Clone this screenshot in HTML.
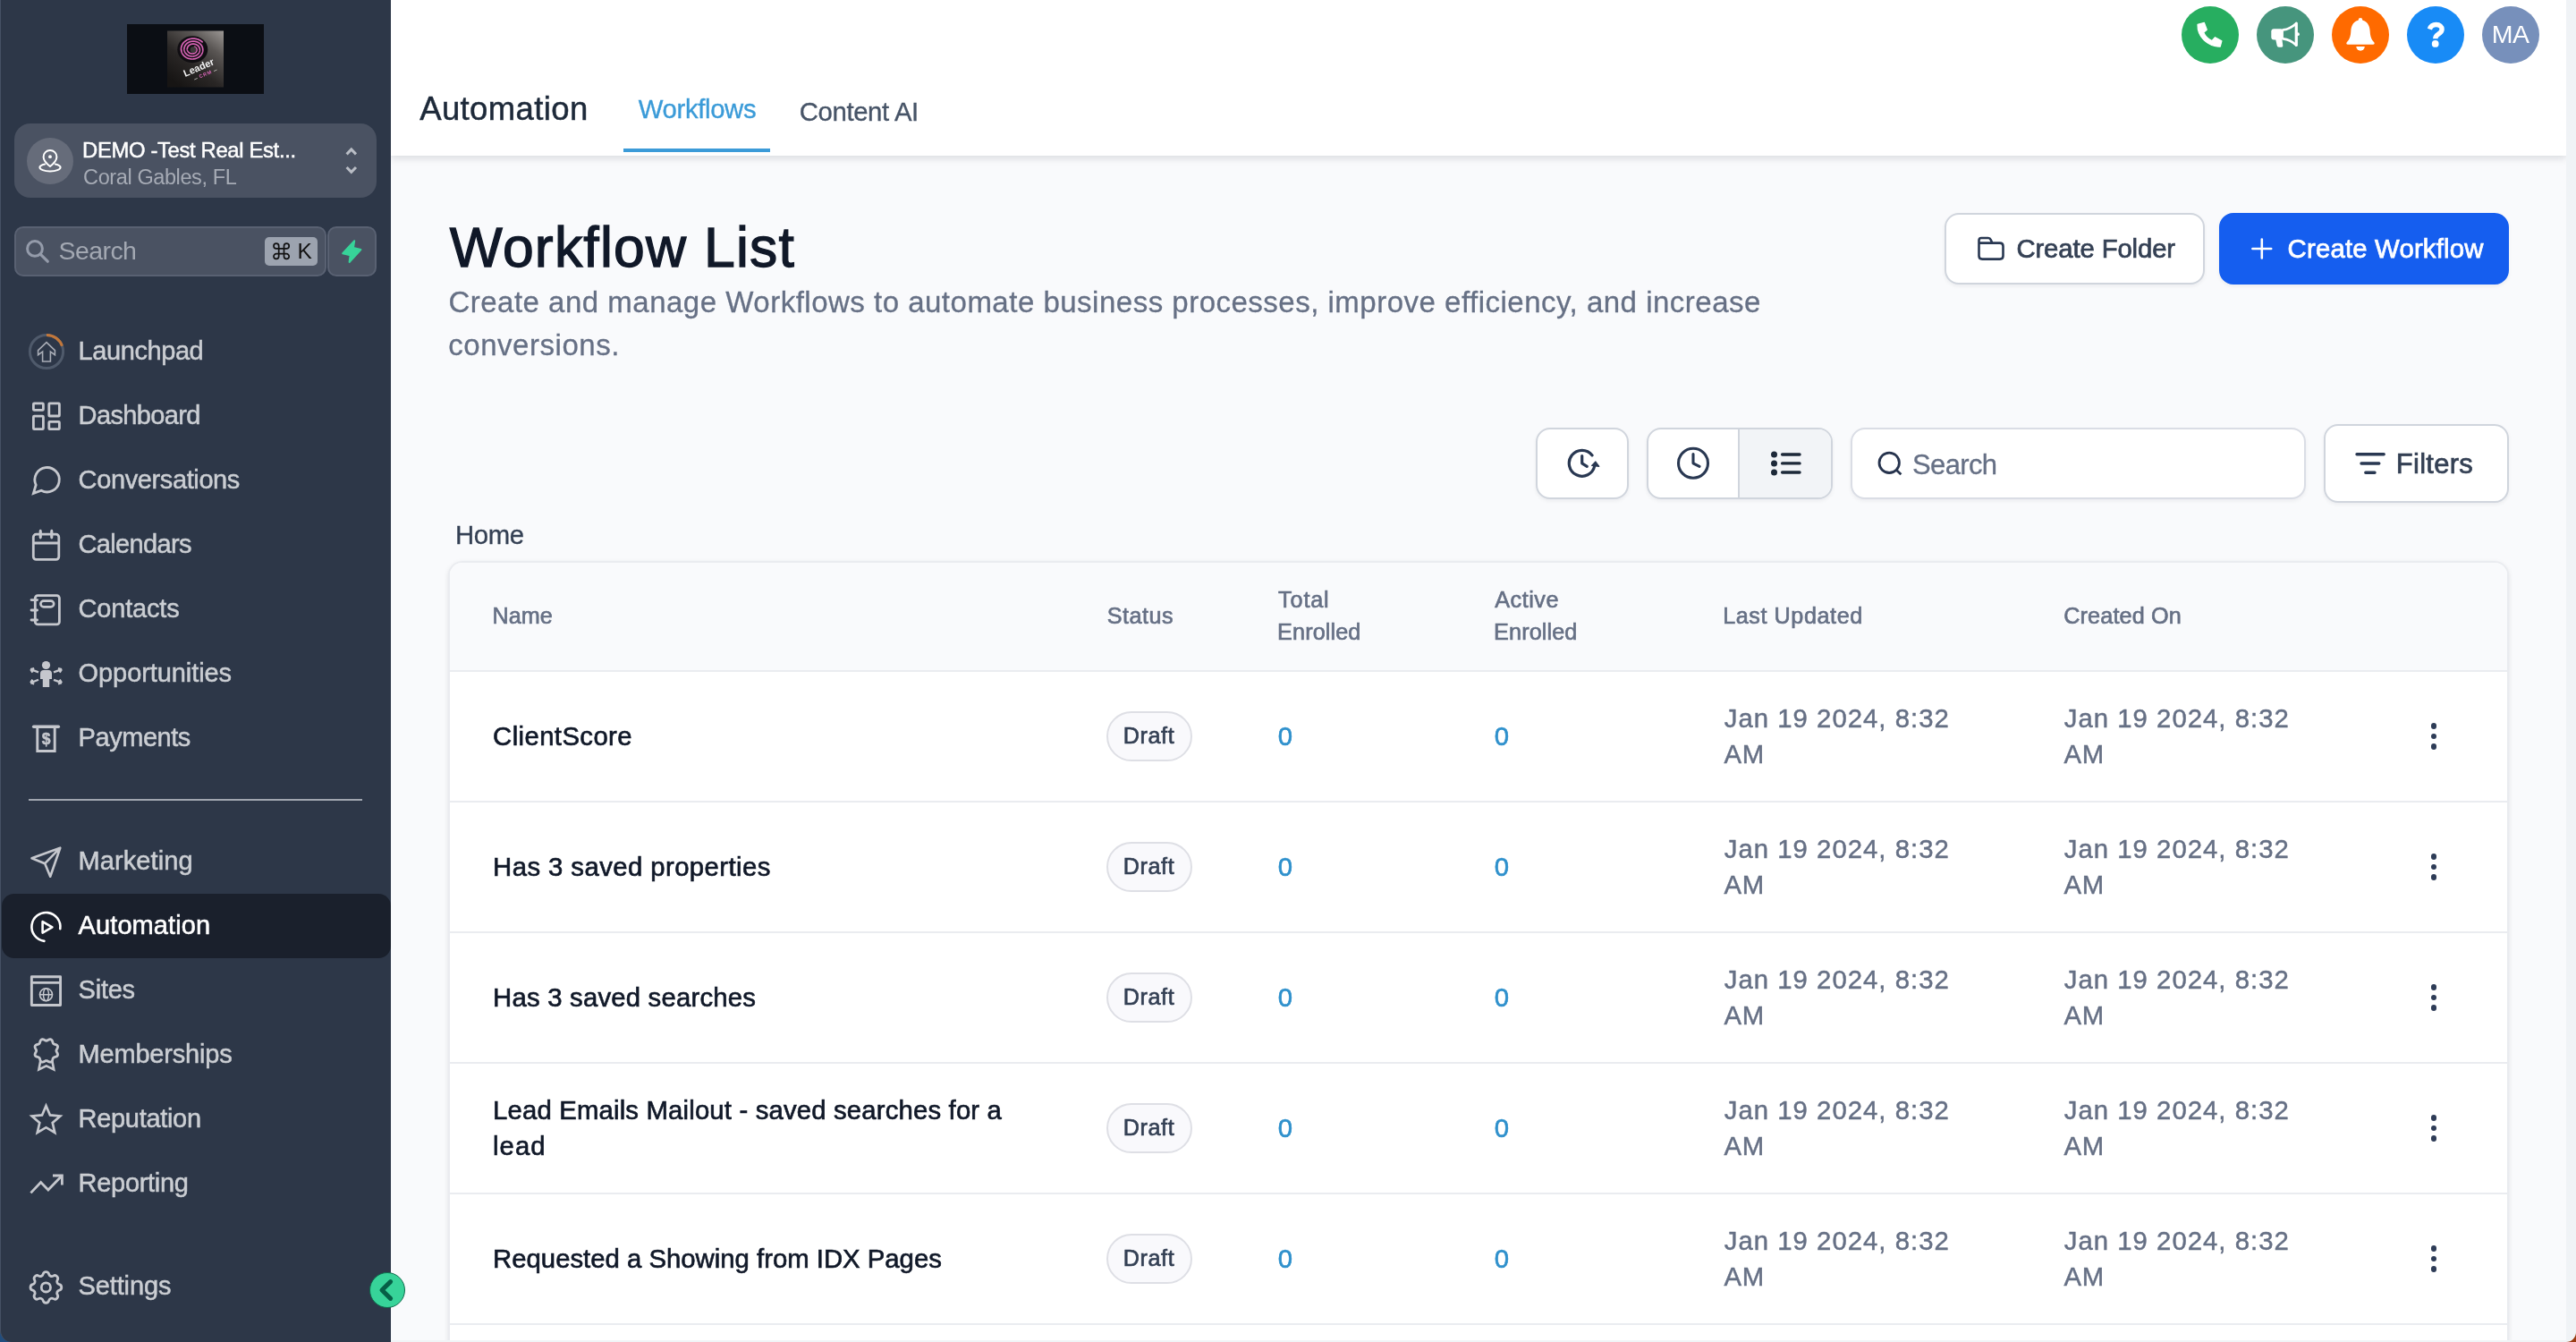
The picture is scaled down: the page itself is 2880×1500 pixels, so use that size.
<!DOCTYPE html>
<html lang="en">
<head>
<meta charset="utf-8">
<title>Workflow List</title>
<style>
*{box-sizing:border-box;margin:0;padding:0}
html,body{width:2880px;height:1500px;overflow:hidden;background:#F9FAFC;font-family:"Liberation Sans",sans-serif}
.abs{position:absolute}
.t{position:absolute;white-space:nowrap;line-height:1;font-family:"Liberation Sans",sans-serif;-webkit-font-smoothing:antialiased}
svg{position:absolute;overflow:visible;will-change:transform}
.tx{position:absolute;left:0;top:0;width:2880px;height:1500px;will-change:transform;pointer-events:none}
#sidebar{position:absolute;left:0;top:0;width:437px;height:1500px;background:#2D3748;border-left:1px solid #465164;border-bottom-left-radius:13px;overflow:visible}
#corner{position:absolute;left:0;top:1480px;width:20px;height:20px;background:#214D7E}
#corner2{position:absolute;left:2869px;top:1480px;width:11px;height:20px;background:#993A10}
#strip{position:absolute;left:437px;top:1498px;width:2432px;height:2px;background:#F0F4F6}
#header{position:absolute;left:437px;top:0;width:2432px;height:174px;background:#fff;box-shadow:0 3px 8px rgba(10,15,30,.13)}
#gutter{position:absolute;left:2869px;top:0;width:11px;height:1500px;background:#F0F3F6;border-bottom-right-radius:13px}
.btn{position:absolute;background:#fff;border:2px solid #D0D5DD;border-radius:16px;box-shadow:0 2px 4px rgba(16,24,40,.06)}
#table{position:absolute;left:501px;top:627px;width:2304px;height:900px;border:2px solid #EAECF0;border-radius:16px;background:#fff;box-shadow:0 2px 6px rgba(16,24,40,.07),0 2px 4px rgba(16,24,40,.04);overflow:hidden}
#thead{position:absolute;left:0;top:0;width:100%;height:122px;background:#F9FAFC;border-bottom:2px solid #EAECF0}
.row{position:absolute;left:0;width:100%;height:2px;background:#EAECF0}
.badge{position:absolute;width:96px;height:56px;border:2px solid #DEDFE5;border-radius:28px;background:#F9F9FC}
.circ{position:absolute;width:64px;height:64px;border-radius:50%;top:7px}
</style>
</head>
<body>
<div id="corner"></div>
<div id="corner2"></div>

<!-- MAIN -->
<div id="table">
  <div id="thead"></div>
  <div class="row" style="top:266px"></div>
  <div class="row" style="top:412px"></div>
  <div class="row" style="top:558px"></div>
  <div class="row" style="top:704px"></div>
  <div class="row" style="top:850px"></div>
</div>
<div id="header">
  <div class="abs" style="left:260px;top:166px;width:164px;height:4px;background:#3B9BD8"></div>
</div>
<div id="strip"></div>
<div id="gutter"></div>
<div class="circ" style="left:2439px;background:#27AE60"></div>
<div class="circ" style="left:2523px;background:#46957D"></div>
<div class="circ" style="left:2607px;background:#FF6A00"></div>
<div class="circ" style="left:2691px;background:#188BF6"></div>
<div class="circ" style="left:2775px;background:#7790BB"></div>

<div class="btn" style="left:2174px;top:238px;width:291px;height:80px"></div>
<div class="btn" style="left:2481px;top:238px;width:324px;height:80px;background:#155EEF;border-color:#155EEF"></div>
<div class="btn" style="left:1717px;top:478px;width:104px;height:80px"></div>
<div class="btn" style="left:1841px;top:478px;width:208px;height:80px;overflow:hidden"><div class="abs" style="left:100px;top:0;width:2px;height:76px;background:#D0D5DD"></div><div class="abs" style="left:102px;top:0;width:102px;height:76px;background:#F2F4F7"></div></div>
<div class="btn" style="left:2069px;top:478px;width:509px;height:80px;border-color:#DADDE5"></div>
<div class="btn" style="left:2598px;top:474px;width:207px;height:88px"></div>
<div class="badge" style="left:1237px;top:795px"></div>
<div class="abs" style="left:2717.8px;top:808.15px;width:6.4px;height:6.4px;border-radius:50%;background:#2E3C57"></div>
<div class="abs" style="left:2717.8px;top:819.80px;width:6.4px;height:6.4px;border-radius:50%;background:#2E3C57"></div>
<div class="abs" style="left:2717.8px;top:831.45px;width:6.4px;height:6.4px;border-radius:50%;background:#2E3C57"></div>
<div class="badge" style="left:1237px;top:941px"></div>
<div class="abs" style="left:2717.8px;top:954.15px;width:6.4px;height:6.4px;border-radius:50%;background:#2E3C57"></div>
<div class="abs" style="left:2717.8px;top:965.80px;width:6.4px;height:6.4px;border-radius:50%;background:#2E3C57"></div>
<div class="abs" style="left:2717.8px;top:977.45px;width:6.4px;height:6.4px;border-radius:50%;background:#2E3C57"></div>
<div class="badge" style="left:1237px;top:1087px"></div>
<div class="abs" style="left:2717.8px;top:1100.15px;width:6.4px;height:6.4px;border-radius:50%;background:#2E3C57"></div>
<div class="abs" style="left:2717.8px;top:1111.80px;width:6.4px;height:6.4px;border-radius:50%;background:#2E3C57"></div>
<div class="abs" style="left:2717.8px;top:1123.45px;width:6.4px;height:6.4px;border-radius:50%;background:#2E3C57"></div>
<div class="badge" style="left:1237px;top:1233px"></div>
<div class="abs" style="left:2717.8px;top:1246.15px;width:6.4px;height:6.4px;border-radius:50%;background:#2E3C57"></div>
<div class="abs" style="left:2717.8px;top:1257.80px;width:6.4px;height:6.4px;border-radius:50%;background:#2E3C57"></div>
<div class="abs" style="left:2717.8px;top:1269.45px;width:6.4px;height:6.4px;border-radius:50%;background:#2E3C57"></div>
<div class="badge" style="left:1237px;top:1379px"></div>
<div class="abs" style="left:2717.8px;top:1392.15px;width:6.4px;height:6.4px;border-radius:50%;background:#2E3C57"></div>
<div class="abs" style="left:2717.8px;top:1403.80px;width:6.4px;height:6.4px;border-radius:50%;background:#2E3C57"></div>
<div class="abs" style="left:2717.8px;top:1415.45px;width:6.4px;height:6.4px;border-radius:50%;background:#2E3C57"></div>
<svg width="2880" height="1500" viewBox="0 0 2880 1500" style="left:0;top:0;pointer-events:none" fill="none" stroke-linecap="round" stroke-linejoin="round">
<path d="M2457,27.4 L2464.3,25.3 L2467.3,33.3 L2463.7,36.3 C2465.5,40.4 2468.9,43.8 2472.9,45.6 L2476.5,41.7 L2483.9,45.8 L2482.2,52.2 C2468,52 2456.6,41 2457,27.4 Z" fill="#fff" stroke="#fff" stroke-width="1.2"/>
<rect x="2539.3" y="32.3" width="13.6" height="12.2" rx="3" fill="#fff"/>
<path d="M2544.2,44 L2545.7,51 Q2546,52.8 2547.8,52.8 L2550.8,52.8 Q2552.6,52.8 2552.3,51 L2551.4,44 Z" fill="#fff"/>
<path d="M2552.6,33.4 C2558,32.8 2563,30 2567.2,26.2 L2567.2,50.4 C2563,46.6 2558,43.9 2552.6,43.4" stroke="#fff" stroke-width="2.7"/>
<path d="M2567.3,26 L2567.3,50.6" stroke="#fff" stroke-width="3"/><circle cx="2569" cy="38.2" r="1.9" fill="#fff"/>
<circle cx="2639" cy="22.4" r="2.3" fill="#fff"/>
<path d="M2639,22.6 C2631.6,22.6 2628.6,28.6 2628.3,35 C2628,41 2626.6,44.4 2623.8,47.2 C2622.8,48.3 2623.4,49.8 2624.9,49.8 L2653.1,49.8 C2654.6,49.8 2655.2,48.3 2654.2,47.2 C2651.4,44.4 2650,41 2649.7,35 C2649.4,28.6 2646.4,22.6 2639,22.6 Z" fill="#fff"/>
<path d="M2634.3,52 A4.75,4.75 0 0 0 2643.8,52 Z" fill="#fff"/>
<path d="M2212.5,272 L2212.5,268.6 Q2212.5,266 2215.1,266 L2222.8,266 Q2224.9,266 2225.7,267.9 L2227.3,271.6 M2212.5,271.6 L2235.9,271.6 Q2239.5,271.6 2239.5,275.2 L2239.5,286 Q2239.5,289.6 2235.9,289.6 L2216.1,289.6 Q2212.5,289.6 2212.5,286 Z" stroke="#293852" stroke-width="2.6"/>
<path d="M2518.4,278 L2539.2,278 M2528.8,267.6 L2528.8,288.4" stroke="#fff" stroke-width="2.6"/>
<path d="M1780.05,508.93 A14.4,14.4 0 1 0 1782.79,520.79" stroke="#293852" stroke-width="3.2"/>
<path d="M1779.6,520.4 L1783.9,516 L1787.8,521.3 Z" fill="#293852" stroke="#293852" stroke-width="1.2"/>
<path d="M1768.7,509.6 L1768.7,517.8 L1774.3,521.4" stroke="#293852" stroke-width="3.2"/>
<circle cx="1893" cy="517.8" r="16.5" stroke="#293852" stroke-width="3.1"/><path d="M1893,507.6 L1893,517.8 L1900,521.4" stroke="#293852" stroke-width="3.1"/>
<circle cx="1983.5" cy="508" r="3.5" fill="#1D2939"/><path d="M1992.6,508 L2012,508" stroke="#1D2939" stroke-width="3.4"/>
<circle cx="1983.5" cy="517.9" r="3.5" fill="#1D2939"/><path d="M1992.6,517.9 L2012,517.9" stroke="#1D2939" stroke-width="3.4"/>
<circle cx="1983.5" cy="528" r="3.5" fill="#1D2939"/><path d="M1992.6,528 L2012,528" stroke="#1D2939" stroke-width="3.4"/>
<circle cx="2112.2" cy="517.3" r="11.2" stroke="#26334D" stroke-width="2.8"/><path d="M2120.6,525.7 L2125.4,530.2" stroke="#26334D" stroke-width="2.8" stroke-linecap="butt"/>
<path d="M2635,507.7 L2665.2,507.7 M2640,518 L2659.8,518 M2644.8,528.2 L2655,528.2" stroke="#293852" stroke-width="3.4"/>
<path d="M2716.4,32.6 C2717.6,29 2720.2,27.5 2723.6,27.5 C2727.6,27.5 2730.1,29.8 2730.1,32.8 C2730.1,35.6 2728.3,36.8 2726,38.2 C2723.8,39.5 2722.8,40.6 2722.8,43.2" stroke="#fff" stroke-width="5.4" stroke-linecap="butt"/><circle cx="2722.7" cy="48.9" r="3.9" fill="#fff"/>
</svg>
<div class="tx"><span class="t" style="left:469.20px;top:103.60px;font-size:36.5px;color:#1D2939;letter-spacing:0.378px;-webkit-text-stroke:0.5px #1D2939;">Automation</span>
<span class="t" style="left:713.80px;top:107.40px;font-size:29.3px;color:#3B9BD8;letter-spacing:-0.350px;-webkit-text-stroke:0.35px #3B9BD8;">Workflows</span>
<span class="t" style="left:893.80px;top:109.80px;font-size:29.3px;color:#475467;letter-spacing:-0.378px;-webkit-text-stroke:0.35px #475467;">Content AI</span>
<span class="t" style="left:2785.80px;top:24.10px;font-size:28.5px;color:#FFFFFF;letter-spacing:-0.600px;">MA</span>
<span class="t" style="left:502.80px;top:244.70px;font-size:62.5px;color:#101828;letter-spacing:1.217px;-webkit-text-stroke:1.3px #101828;">Workflow List</span>
<span class="t" style="left:501.40px;top:321.00px;font-size:33px;color:#667085;letter-spacing:0.499px;-webkit-text-stroke:0.3px #667085;">Create and manage Workflows to automate business processes, improve efficiency, and increase</span>
<span class="t" style="left:501.30px;top:369.00px;font-size:33px;color:#667085;letter-spacing:0.527px;-webkit-text-stroke:0.3px #667085;">conversions.</span>
<span class="t" style="left:2254.40px;top:262.70px;font-size:29.3px;color:#344054;letter-spacing:-0.117px;-webkit-text-stroke:0.7px #344054;">Create Folder</span>
<span class="t" style="left:2557.60px;top:262.70px;font-size:29.3px;color:#FFFFFF;letter-spacing:0.200px;-webkit-text-stroke:0.75px #FFFFFF;">Create Workflow</span>
<span class="t" style="left:2138.00px;top:504.00px;font-size:31px;color:#667085;letter-spacing:-0.640px;-webkit-text-stroke:0.3px #667085;">Search</span>
<span class="t" style="left:2678.80px;top:502.60px;font-size:31px;color:#344054;letter-spacing:0.267px;-webkit-text-stroke:0.7px #344054;">Filters</span>
<span class="t" style="left:509.00px;top:583.00px;font-size:29.3px;color:#344054;letter-spacing:-0.400px;-webkit-text-stroke:0.3px #344054;">Home</span>
<span class="t" style="left:550.60px;top:676.00px;font-size:25.2px;color:#667085;letter-spacing:0.000px;-webkit-text-stroke:0.65px #667085;">Name</span>
<span class="t" style="left:1237.70px;top:676.00px;font-size:25.2px;color:#667085;letter-spacing:0.480px;-webkit-text-stroke:0.65px #667085;">Status</span>
<span class="t" style="left:1429.10px;top:658.00px;font-size:25.2px;color:#667085;letter-spacing:0.850px;-webkit-text-stroke:0.65px #667085;">Total</span>
<span class="t" style="left:1428.10px;top:694.00px;font-size:25.2px;color:#667085;letter-spacing:0.114px;-webkit-text-stroke:0.65px #667085;">Enrolled</span>
<span class="t" style="left:1671.30px;top:658.00px;font-size:25.2px;color:#667085;letter-spacing:0.520px;-webkit-text-stroke:0.65px #667085;">Active</span>
<span class="t" style="left:1670.10px;top:694.00px;font-size:25.2px;color:#667085;letter-spacing:0.114px;-webkit-text-stroke:0.65px #667085;">Enrolled</span>
<span class="t" style="left:1926.20px;top:676.00px;font-size:25.2px;color:#667085;letter-spacing:0.564px;-webkit-text-stroke:0.65px #667085;">Last Updated</span>
<span class="t" style="left:2307.20px;top:676.00px;font-size:25.2px;color:#667085;letter-spacing:0.156px;-webkit-text-stroke:0.65px #667085;">Created On</span>
<span class="t" style="left:551.10px;top:808.00px;font-size:29.3px;color:#101828;letter-spacing:0.400px;-webkit-text-stroke:0.65px #101828;">ClientScore</span>
<span class="t" style="left:1255.70px;top:810.00px;font-size:25.2px;color:#344054;letter-spacing:0.600px;-webkit-text-stroke:0.65px #344054;">Draft</span>
<span class="t" style="left:1428.80px;top:808.00px;font-size:29.3px;color:#2E90CC;letter-spacing:0.000px;-webkit-text-stroke:0.6px #2E90CC;">0</span>
<span class="t" style="left:1670.80px;top:808.00px;font-size:29.3px;color:#2E90CC;letter-spacing:0.000px;-webkit-text-stroke:0.6px #2E90CC;">0</span>
<span class="t" style="left:1927.80px;top:788.00px;font-size:29.3px;color:#667085;letter-spacing:1.025px;-webkit-text-stroke:0.45px #667085;">Jan 19 2024, 8:32</span>
<span class="t" style="left:1927.50px;top:828.00px;font-size:29.3px;color:#667085;letter-spacing:0.800px;-webkit-text-stroke:0.45px #667085;">AM</span>
<span class="t" style="left:2307.80px;top:788.00px;font-size:29.3px;color:#667085;letter-spacing:1.025px;-webkit-text-stroke:0.45px #667085;">Jan 19 2024, 8:32</span>
<span class="t" style="left:2307.50px;top:828.00px;font-size:29.3px;color:#667085;letter-spacing:0.800px;-webkit-text-stroke:0.45px #667085;">AM</span>
<span class="t" style="left:551.10px;top:954.00px;font-size:29.3px;color:#101828;letter-spacing:0.429px;-webkit-text-stroke:0.65px #101828;">Has 3 saved properties</span>
<span class="t" style="left:1255.70px;top:956.00px;font-size:25.2px;color:#344054;letter-spacing:0.600px;-webkit-text-stroke:0.65px #344054;">Draft</span>
<span class="t" style="left:1428.80px;top:954.00px;font-size:29.3px;color:#2E90CC;letter-spacing:0.000px;-webkit-text-stroke:0.6px #2E90CC;">0</span>
<span class="t" style="left:1670.80px;top:954.00px;font-size:29.3px;color:#2E90CC;letter-spacing:0.000px;-webkit-text-stroke:0.6px #2E90CC;">0</span>
<span class="t" style="left:1927.80px;top:934.00px;font-size:29.3px;color:#667085;letter-spacing:1.025px;-webkit-text-stroke:0.45px #667085;">Jan 19 2024, 8:32</span>
<span class="t" style="left:1927.50px;top:974.00px;font-size:29.3px;color:#667085;letter-spacing:0.800px;-webkit-text-stroke:0.45px #667085;">AM</span>
<span class="t" style="left:2307.80px;top:934.00px;font-size:29.3px;color:#667085;letter-spacing:1.025px;-webkit-text-stroke:0.45px #667085;">Jan 19 2024, 8:32</span>
<span class="t" style="left:2307.50px;top:974.00px;font-size:29.3px;color:#667085;letter-spacing:0.800px;-webkit-text-stroke:0.45px #667085;">AM</span>
<span class="t" style="left:551.10px;top:1100.00px;font-size:29.3px;color:#101828;letter-spacing:0.211px;-webkit-text-stroke:0.65px #101828;">Has 3 saved searches</span>
<span class="t" style="left:1255.70px;top:1102.00px;font-size:25.2px;color:#344054;letter-spacing:0.600px;-webkit-text-stroke:0.65px #344054;">Draft</span>
<span class="t" style="left:1428.80px;top:1100.00px;font-size:29.3px;color:#2E90CC;letter-spacing:0.000px;-webkit-text-stroke:0.6px #2E90CC;">0</span>
<span class="t" style="left:1670.80px;top:1100.00px;font-size:29.3px;color:#2E90CC;letter-spacing:0.000px;-webkit-text-stroke:0.6px #2E90CC;">0</span>
<span class="t" style="left:1927.80px;top:1080.00px;font-size:29.3px;color:#667085;letter-spacing:1.025px;-webkit-text-stroke:0.45px #667085;">Jan 19 2024, 8:32</span>
<span class="t" style="left:1927.50px;top:1120.00px;font-size:29.3px;color:#667085;letter-spacing:0.800px;-webkit-text-stroke:0.45px #667085;">AM</span>
<span class="t" style="left:2307.80px;top:1080.00px;font-size:29.3px;color:#667085;letter-spacing:1.025px;-webkit-text-stroke:0.45px #667085;">Jan 19 2024, 8:32</span>
<span class="t" style="left:2307.50px;top:1120.00px;font-size:29.3px;color:#667085;letter-spacing:0.800px;-webkit-text-stroke:0.45px #667085;">AM</span>
<span class="t" style="left:551.10px;top:1226.00px;font-size:29.3px;color:#101828;letter-spacing:0.171px;-webkit-text-stroke:0.65px #101828;">Lead Emails Mailout - saved searches for a</span>
<span class="t" style="left:551.10px;top:1266.00px;font-size:29.3px;color:#101828;letter-spacing:1.000px;-webkit-text-stroke:0.65px #101828;">lead</span>
<span class="t" style="left:1255.70px;top:1248.00px;font-size:25.2px;color:#344054;letter-spacing:0.600px;-webkit-text-stroke:0.65px #344054;">Draft</span>
<span class="t" style="left:1428.80px;top:1246.00px;font-size:29.3px;color:#2E90CC;letter-spacing:0.000px;-webkit-text-stroke:0.6px #2E90CC;">0</span>
<span class="t" style="left:1670.80px;top:1246.00px;font-size:29.3px;color:#2E90CC;letter-spacing:0.000px;-webkit-text-stroke:0.6px #2E90CC;">0</span>
<span class="t" style="left:1927.80px;top:1226.00px;font-size:29.3px;color:#667085;letter-spacing:1.025px;-webkit-text-stroke:0.45px #667085;">Jan 19 2024, 8:32</span>
<span class="t" style="left:1927.50px;top:1266.00px;font-size:29.3px;color:#667085;letter-spacing:0.800px;-webkit-text-stroke:0.45px #667085;">AM</span>
<span class="t" style="left:2307.80px;top:1226.00px;font-size:29.3px;color:#667085;letter-spacing:1.025px;-webkit-text-stroke:0.45px #667085;">Jan 19 2024, 8:32</span>
<span class="t" style="left:2307.50px;top:1266.00px;font-size:29.3px;color:#667085;letter-spacing:0.800px;-webkit-text-stroke:0.45px #667085;">AM</span>
<span class="t" style="left:551.10px;top:1392.00px;font-size:29.3px;color:#101828;letter-spacing:0.006px;-webkit-text-stroke:0.65px #101828;">Requested a Showing from IDX Pages</span>
<span class="t" style="left:1255.70px;top:1394.00px;font-size:25.2px;color:#344054;letter-spacing:0.600px;-webkit-text-stroke:0.65px #344054;">Draft</span>
<span class="t" style="left:1428.80px;top:1392.00px;font-size:29.3px;color:#2E90CC;letter-spacing:0.000px;-webkit-text-stroke:0.6px #2E90CC;">0</span>
<span class="t" style="left:1670.80px;top:1392.00px;font-size:29.3px;color:#2E90CC;letter-spacing:0.000px;-webkit-text-stroke:0.6px #2E90CC;">0</span>
<span class="t" style="left:1927.80px;top:1372.00px;font-size:29.3px;color:#667085;letter-spacing:1.025px;-webkit-text-stroke:0.45px #667085;">Jan 19 2024, 8:32</span>
<span class="t" style="left:1927.50px;top:1412.00px;font-size:29.3px;color:#667085;letter-spacing:0.800px;-webkit-text-stroke:0.45px #667085;">AM</span>
<span class="t" style="left:2307.80px;top:1372.00px;font-size:29.3px;color:#667085;letter-spacing:1.025px;-webkit-text-stroke:0.45px #667085;">Jan 19 2024, 8:32</span>
<span class="t" style="left:2307.50px;top:1412.00px;font-size:29.3px;color:#667085;letter-spacing:0.800px;-webkit-text-stroke:0.45px #667085;">AM</span></div>

<!-- SIDEBAR -->
<div id="sidebar"></div>
<div class="abs" style="left:142px;top:27px;width:153px;height:78px;background:#0B0E14"></div>
<div class="abs" style="left:16px;top:138px;width:405px;height:83px;border-radius:18px;background:#4A5262"></div>
<div class="abs" style="left:30px;top:154px;width:52px;height:52px;border-radius:50%;background:#666C7A"></div>
<div class="abs" style="left:16px;top:253px;width:349px;height:56px;border-radius:10px;background:#4A5262;border:2px solid #596172"></div>
<div class="abs" style="left:366px;top:253px;width:55px;height:56px;border-radius:10px;background:#4A5262;border:2px solid #596172"></div>
<div class="abs" style="left:296px;top:265px;width:59px;height:32px;border-radius:5px;background:#9CA3AF"></div>
<div class="abs" style="left:32px;top:893px;width:373px;height:2px;background:#A0A5AF"></div>
<div class="abs" style="left:2px;top:999px;width:435px;height:72px;border-radius:14px;background:#1A202C"></div>
<div class="abs" style="left:413px;top:1422px;width:40px;height:40px;border-radius:50%;background:#37D399;border:1px solid #0E6B4C"></div>
<svg width="437" height="1500" viewBox="0 0 437 1500" style="left:0;top:0" fill="none" stroke-linecap="round" stroke-linejoin="round">
<defs><linearGradient id="lg" x1="1" y1="0" x2="0.25" y2="1"><stop offset="0" stop-color="#9C9895"/><stop offset="0.3" stop-color="#5A5654"/><stop offset="0.65" stop-color="#2A2726"/><stop offset="1" stop-color="#171514"/></linearGradient></defs>
<rect x="187" y="34.5" width="63" height="63" fill="url(#lg)"/>
<ellipse cx="215.3" cy="55.2" rx="17" ry="15" fill="#100E12"/>
<polyline points="217.45,52.33 217.62,52.39 217.79,52.47 217.96,52.55 218.13,52.64 218.29,52.74 218.44,52.84 218.59,52.95 218.74,53.07 218.87,53.20 219.01,53.33 219.13,53.47 219.25,53.61 219.36,53.76 219.47,53.92 219.56,54.08 219.65,54.25 219.72,54.42 219.79,54.59 219.85,54.77 219.90,54.95 219.94,55.14 219.97,55.33 219.99,55.52 220.00,55.71 220.00,55.90 219.99,56.09 219.96,56.29 219.93,56.48 219.88,56.67 219.83,56.87 219.76,57.06 219.68,57.24 219.60,57.43 219.50,57.61 219.39,57.79 219.27,57.97 219.14,58.14 219.00,58.30 218.85,58.47 218.69,58.62 218.52,58.77 218.34,58.91 218.16,59.05 217.96,59.17 217.76,59.29 217.55,59.41 217.33,59.51 217.11,59.60 216.88,59.69 216.65,59.76 216.41,59.83 216.16,59.88 215.92,59.93 215.66,59.97 215.41,59.99 215.15,60.00 214.89,60.01 214.63,60.00 214.37,59.98 214.11,59.95 213.86,59.91 213.60,59.85 213.34,59.79 213.09,59.71 212.84,59.63 212.59,59.53 212.35,59.42 212.12,59.30 211.89,59.17 211.66,59.03 211.44,58.88 211.23,58.72 211.03,58.55 210.84,58.38 210.66,58.19 210.48,57.99 210.32,57.79 210.17,57.58 210.03,57.36 209.90,57.13 209.78,56.90 209.67,56.67 209.58,56.42 209.50,56.18 209.43,55.92 209.38,55.67 209.34,55.41 209.31,55.15 209.30,54.89 209.31,54.63 209.33,54.36 209.36,54.10 209.41,53.83 209.47,53.57 209.54,53.31 209.64,53.05 209.74,52.80 209.86,52.55 210.00,52.30 210.14,52.06 210.30,51.82 210.48,51.59 210.67,51.37 210.87,51.16 211.08,50.95 211.31,50.75 211.55,50.56 211.79,50.38 212.05,50.21 212.32,50.05 212.60,49.90 212.89,49.76 213.18,49.64 213.49,49.53 213.80,49.43 214.11,49.34 214.43,49.26 214.76,49.20 215.09,49.16 215.43,49.12 215.76,49.10 216.10,49.10 216.44,49.11 216.78,49.13 217.12,49.17 217.46,49.23 217.80,49.29 218.13,49.38 218.46,49.47 218.79,49.58 219.11,49.71 219.42,49.85 219.73,50.00 220.03,50.17 220.32,50.35 220.60,50.54 220.87,50.74 221.13,50.96 221.39,51.19 221.62,51.43 221.85,51.68 222.06,51.94 222.26,52.21 222.44,52.49 222.61,52.77 222.77,53.07 222.90,53.37 223.03,53.68 223.13,54.00 223.22,54.32 223.29,54.64 223.34,54.97 223.38,55.30 223.40,55.63 223.39,55.97 223.37,56.30 223.34,56.64 223.28,56.97 223.20,57.30 223.11,57.63 223.00,57.96 222.87,58.28 222.72,58.60 222.56,58.91 222.37,59.22 222.17,59.52 221.96,59.81 221.72,60.09 221.48,60.36 221.21,60.62 220.93,60.88 220.64,61.12 220.33,61.35 220.01,61.56 219.68,61.76 219.33,61.95 218.98,62.13 218.61,62.29 218.23,62.43 217.85,62.56 217.46,62.67 217.06,62.77 216.65,62.85 216.24,62.91 215.83,62.96 215.41,62.99 214.99,63.00 214.57,62.99 214.15,62.96 213.73,62.92 213.31,62.86 212.89,62.78 212.48,62.68 212.07,62.57 211.67,62.44 211.27,62.29 210.89,62.12 210.50,61.94 210.13,61.74 209.77,61.52 209.42,61.29 209.09,61.05 208.76,60.78 208.45,60.51 208.16,60.22 207.87,59.92 207.61,59.60 207.36,59.28 207.13,58.94 206.92,58.59 206.73,58.23 206.55,57.87 206.40,57.49 206.26,57.11 206.15,56.73 206.06,56.33 205.99,55.93 205.94,55.53 205.91,55.13 205.90,54.72 205.92,54.32 205.96,53.91 206.02,53.51 206.10,53.10 206.21,52.70 206.34,52.31 206.48,51.91 206.66,51.53 206.85,51.15 207.06,50.78 207.30,50.41 207.55,50.06 207.83,49.72 208.12,49.38 208.43,49.06 208.76,48.76 209.11,48.46 209.47,48.18 209.85,47.92 210.25,47.67 210.66,47.43 211.08,47.22 211.51,47.02 211.96,46.84 212.42,46.68 212.88,46.54 213.36,46.41 213.84,46.31 214.33,46.23 214.82,46.17 215.32,46.13 215.82,46.11 216.32,46.11 216.82,46.13 217.32,46.17 217.82,46.24 218.32,46.33 218.82,46.43 219.30,46.56 219.78,46.71 220.26,46.88 220.72,47.07 221.18,47.28 221.62,47.51 222.06,47.76 222.48,48.03 222.88,48.31 223.27,48.62 223.65,48.94 224.00,49.27 224.34,49.62 224.66,49.99 224.96,50.37 225.25,50.77 225.50,51.17 225.74,51.59 225.96,52.02 226.15,52.45 226.32,52.90 226.46,53.36 226.58,53.82 226.67,54.28 226.74,54.75 226.78,55.23 226.80,55.70 226.79,56.18 226.76,56.66 226.70,57.14 226.61,57.61 226.49,58.08 226.35,58.55 226.19,59.01 226.00,59.47 225.78,59.92 225.54,60.36 225.28,60.79 224.99,61.20 224.68,61.61 224.34,62.01 223.99,62.39 223.61,62.75 223.21,63.10 222.79,63.44 222.36,63.75 221.90,64.05 221.43,64.33 220.95,64.59 220.45,64.83 219.93,65.05 219.40,65.25 218.87,65.42 218.32,65.58 217.76,65.71 217.19,65.81 216.62,65.89 216.05,65.95 215.47,65.98 214.88,65.99 214.30,65.98 213.71,65.94 213.13,65.87 212.55,65.78 211.98,65.67 211.41,65.53 210.85,65.37 210.30,65.18 209.75,64.97 209.22,64.74 208.70,64.48 208.19,64.20 207.70,63.90 207.22,63.58 206.76,63.24 206.32,62.88 205.90,62.50 205.50,62.10 205.12,61.68 204.76,61.25 204.43,60.80 204.12,60.34 203.83,59.86 203.57,59.37 203.34,58.87 203.14,58.36 202.96,57.84 202.81,57.32 202.69,56.78 202.60,56.24 202.53,55.70 202.50,55.15 202.50,54.60 202.53,54.05 202.58,53.50 202.67,52.96 202.79,52.41 202.93,51.87 203.11,51.34 203.32,50.81 203.55,50.29 203.81,49.79 204.11,49.29 204.42,48.80 204.77,48.33 205.14,47.87 205.54,47.43 205.96,47.00 206.40,46.59 206.87,46.20 207.36,45.83 207.87,45.48 208.40,45.15 208.95,44.84 209.51,44.56 210.10,44.29 210.69,44.06 211.30,43.85 211.92,43.66 212.55,43.50 213.20,43.37 213.84,43.26 214.50,43.18 215.16,43.13 215.82,43.11 216.49,43.11 217.15,43.15 217.82,43.21 218.48,43.30 219.13,43.41 219.79,43.56 220.43,43.73 221.06,43.93 221.69,44.16 222.30,44.41 222.90,44.69 223.48,45.00 224.05,45.33 224.60,45.68 225.13,46.06 225.64,46.46 226.13,46.88" stroke="#D563B4" stroke-width="1.7" fill="none"/>
<circle cx="216" cy="55.6" r="3.4" fill="#3B3939"/>
<text transform="translate(207,86) rotate(-23)" font-family="Liberation Sans, sans-serif" font-size="11" font-weight="700" fill="#F4F4F4" stroke="none">Leader</text>
<text transform="translate(223.5,87.6) rotate(-23)" font-family="Liberation Sans, sans-serif" font-size="5.6" font-weight="700" fill="#D563B4" stroke="none" letter-spacing="0.8">CRM</text>
<path d="M217.6,88.8 L220.4,87.6 M239.4,79.4 L242.2,78.2" stroke="#B9B5B2" stroke-width="0.9"/>
<path d="M56,186 C56,186 48.6,180 48.6,175.4 A7.4,7.4 0 1 1 63.4,175.4 C63.4,180 56,186 56,186 Z" stroke="#fff" stroke-width="2"/>
<circle cx="56" cy="175.2" r="1.9" fill="#fff"/>
<path d="M50.2,183.4 C46.6,184.2 44.4,185.5 44.4,187 C44.4,189.5 49.6,191.4 56,191.4 S67.6,189.5 67.6,187 C67.6,185.5 65.4,184.2 61.8,183.4" stroke="#fff" stroke-width="2"/>
<path d="M387.6,172.4 L392.8,167 L398,172.4 M387.6,187 L392.8,192.4 L398,187" stroke="#B9BDC5" stroke-width="3" stroke-linecap="butt" stroke-linejoin="miter"/>
<circle cx="39" cy="277.9" r="8.4" stroke="#949BAA" stroke-width="3"/><path d="M45.4,284.3 L53.3,292.2" stroke="#949BAA" stroke-width="3.2"/>
<path d="M311.70000000000005,275.05 A2.85,2.85 0 1 0 308.85,277.90000000000003 L320.35,277.90000000000003 A2.85,2.85 0 1 0 317.5,275.05 L317.5,286.55 A2.85,2.85 0 1 0 320.35,283.7 L308.85,283.7 A2.85,2.85 0 1 0 311.70000000000005,286.55 Z" stroke="#111" stroke-width="1.7"/>
<path d="M396.2,269.3 L383.2,283.2 L391.6,285.4 L390.6,293 L403.4,279 L395,276.9 Z" fill="#37D399" stroke="#37D399" stroke-width="2" stroke-linejoin="round"/>
<circle cx="52" cy="393" r="18.6" stroke="#4F5A6B" stroke-width="3"/>
<path d="M52.00,374.40 A18.6,18.6 0 0 1 69.48,386.64" stroke="#C2773A" stroke-width="3" stroke-linecap="butt"/>
<path d="M47.6,404 L47.6,393 L42.6,396.6 L42.6,391.6 L52,382.6 L61.4,391.6 L61.4,396.6 L56.4,393 L56.4,404 Z" stroke="#A9ADB6" stroke-width="1.6" stroke-linejoin="miter"/>
<rect x="37.40" y="450.90" width="11.00" height="7.40" rx="0.8" stroke="#C5C7CD" stroke-width="2.8"/>
<rect x="54.80" y="450.90" width="11.60" height="14.10" rx="0.8" stroke="#C5C7CD" stroke-width="2.8"/>
<rect x="37.40" y="465.20" width="11.00" height="14.40" rx="0.8" stroke="#C5C7CD" stroke-width="2.8"/>
<rect x="54.80" y="471.40" width="11.60" height="8.20" rx="0.8" stroke="#C5C7CD" stroke-width="2.8"/>
<path d="M40.18,541.99 A13.7,13.7 0 1 1 46.17,548.30 L37.4,551.4 Z" stroke="#C5C7CD" stroke-width="2.8" stroke-linejoin="miter"/>
<rect x="37.30" y="597.20" width="28.50" height="28.20" rx="3.2" stroke="#C5C7CD" stroke-width="2.8"/>
<path d="M37,607 L66,607 M45.2,593.6 L45.2,600.8 M57.8,593.6 L57.8,600.8" stroke="#C5C7CD" stroke-width="2.8" stroke-linecap="butt"/>
<path d="M45.2,593.2 L45.2,601 M57.8,593.2 L57.8,601" stroke="#C5C7CD" stroke-width="2.8"/>
<rect x="39.30" y="665.60" width="27.10" height="32.30" rx="3" stroke="#C5C7CD" stroke-width="2.8"/>
<path d="M35,670.6 L41.6,670.6 M35,682 L41.6,682 M35,693 L41.6,693" stroke="#C5C7CD" stroke-width="2.8"/>
<rect x="45.4" y="671.6" width="14.8" height="6.8" rx="3.4" stroke="#C5C7CD" stroke-width="2.6"/>
<circle cx="51.5" cy="743.5" r="4.6" fill="#C5C7CD"/>
<path d="M45,759 L45,753 Q45,749 49,749 L54,749 Q58,749 58,753 L58,759 L55.2,759 L55.2,768 L47.8,768 L47.8,759 Z" fill="#C5C7CD"/>
<path d="M43.0,751.4 L34.2,748.2 M34.2,748.2 L38.2,747.0 M34.2,748.2 L36.5,751.7 M60.0,751.4 L69.0,748.2 M69.0,748.2 L66.7,751.7 M69.0,748.2 L65.0,747.0 M43.0,759.8 L34.2,763.2 M34.2,763.2 L36.4,759.6 M34.2,763.2 L38.2,764.3 M60.0,759.8 L69.0,763.2 M69.0,763.2 L65.0,764.4 M69.0,763.2 L66.7,759.7 " stroke="#C5C7CD" stroke-width="2.3" stroke-linecap="butt" stroke-linejoin="miter"/>
<path d="M37.6,812.2 L65.4,812.2" stroke="#C5C7CD" stroke-width="3.4"/>
<path d="M41.8,813 L41.8,839.5 L61.2,839.5 L61.2,813" stroke="#C5C7CD" stroke-width="2.9" stroke-linecap="butt" stroke-linejoin="miter"/>
<text x="51.6" y="831.6" text-anchor="middle" font-family="Liberation Sans, sans-serif" font-size="17.5" font-weight="700" fill="#C5C7CD" stroke="#C5C7CD" stroke-width="0.5">$</text>
<path d="M67.3,947.7 L35.5,959.3 L50.2,965.2 L56.2,979.7 Z M50.2,965.2 L67.3,947.7" stroke="#C5C7CD" stroke-width="2.6" stroke-linejoin="round"/>
<path d="M67.24,1038.23 A16,16 0 1 0 49.45,1051.88" stroke="#fff" stroke-width="2.6"/>
<path d="M47.6,1030.2 L47.6,1042.6 L58.4,1036.4 Z" stroke="#fff" stroke-width="2.6"/>
<rect x="35.35" y="1091.75" width="32.20" height="31.80" rx="0" stroke="#C5C7CD" stroke-width="2.9"/>
<path d="M35,1098.4 L68,1098.4" stroke="#C5C7CD" stroke-width="2.9" stroke-linecap="butt"/>
<circle cx="51.5" cy="1111.7" r="7" stroke="#C5C7CD" stroke-width="1.6"/><ellipse cx="51.5" cy="1111.7" rx="3" ry="7" stroke="#C5C7CD" stroke-width="1.4"/><path d="M44.5,1111.7 L58.5,1111.7" stroke="#C5C7CD" stroke-width="1.4"/>
<polygon points="62.95,1174.40 63.04,1174.99 63.30,1175.61 63.67,1176.28 64.06,1177.01 64.38,1177.77 64.55,1178.54 64.52,1179.28 64.24,1179.94 63.75,1180.49 63.08,1180.91 62.31,1181.22 61.52,1181.46 60.79,1181.68 60.17,1181.93 59.68,1182.28 59.33,1182.77 59.08,1183.39 58.86,1184.12 58.62,1184.91 58.31,1185.68 57.89,1186.35 57.34,1186.84 56.68,1187.12 55.94,1187.15 55.17,1186.98 54.41,1186.66 53.68,1186.27 53.01,1185.90 52.39,1185.64 51.80,1185.55 51.21,1185.64 50.59,1185.90 49.92,1186.27 49.19,1186.66 48.43,1186.98 47.66,1187.15 46.92,1187.12 46.26,1186.84 45.71,1186.35 45.29,1185.68 44.98,1184.91 44.74,1184.12 44.52,1183.39 44.27,1182.77 43.92,1182.28 43.43,1181.93 42.81,1181.68 42.08,1181.46 41.29,1181.22 40.52,1180.91 39.85,1180.49 39.36,1179.94 39.08,1179.28 39.05,1178.54 39.22,1177.77 39.54,1177.01 39.93,1176.28 40.30,1175.61 40.56,1174.99 40.65,1174.40 40.56,1173.81 40.30,1173.19 39.93,1172.52 39.54,1171.79 39.22,1171.03 39.05,1170.26 39.08,1169.52 39.36,1168.86 39.85,1168.31 40.52,1167.89 41.29,1167.58 42.08,1167.34 42.81,1167.12 43.43,1166.87 43.92,1166.52 44.27,1166.03 44.52,1165.41 44.74,1164.68 44.98,1163.89 45.29,1163.12 45.71,1162.45 46.26,1161.96 46.92,1161.68 47.66,1161.65 48.43,1161.82 49.19,1162.14 49.92,1162.53 50.59,1162.90 51.21,1163.16 51.80,1163.25 52.39,1163.16 53.01,1162.90 53.68,1162.53 54.41,1162.14 55.17,1161.82 55.94,1161.65 56.68,1161.68 57.34,1161.96 57.89,1162.45 58.31,1163.12 58.62,1163.89 58.86,1164.68 59.08,1165.41 59.33,1166.03 59.68,1166.52 60.17,1166.87 60.79,1167.12 61.52,1167.34 62.31,1167.58 63.08,1167.89 63.75,1168.31 64.24,1168.86 64.52,1169.52 64.55,1170.26 64.38,1171.03 64.06,1171.79 63.67,1172.52 63.30,1173.19 63.04,1173.81" stroke="#C5C7CD" stroke-width="2.8"/>
<path d="M45.2,1186 L43.4,1195.4 L51.8,1191.4 L60.2,1195.4 L58.4,1186" stroke="#C5C7CD" stroke-width="2.6" stroke-linejoin="miter" stroke-linecap="butt"/>
<polygon points="51.50,1236.00 55.97,1246.45 67.29,1247.47 58.73,1254.95 61.26,1266.03 51.50,1260.20 41.74,1266.03 44.27,1254.95 35.71,1247.47 47.03,1246.45" stroke="#C5C7CD" stroke-width="2.7" stroke-linejoin="miter"/>
<path d="M34.4,1333.4 L45.6,1321.6 L53.9,1330 L68.4,1315" stroke="#C5C7CD" stroke-width="2.8" stroke-linecap="butt" stroke-linejoin="miter"/>
<path d="M59,1314 L69.4,1314 L69.4,1324.6" stroke="#C5C7CD" stroke-width="2.8" stroke-linecap="butt" stroke-linejoin="miter"/>
<g transform="translate(28.24,1415.74) scale(1.93)" stroke="#C5C7CD" stroke-width="1.45"><path d="M10.325 4.317c.426-1.756 2.924-1.756 3.35 0a1.724 1.724 0 002.573 1.066c1.543-.94 3.31.826 2.37 2.37a1.724 1.724 0 001.065 2.572c1.756.426 1.756 2.924 0 3.35a1.724 1.724 0 00-1.066 2.573c.94 1.543-.826 3.31-2.37 2.37a1.724 1.724 0 00-2.572 1.065c-.426 1.756-2.924 1.756-3.35 0a1.724 1.724 0 00-2.573-1.066c-1.543.94-3.31-.826-2.37-2.37a1.724 1.724 0 00-1.065-2.572c-1.756-.426-1.756-2.924 0-3.35a1.724 1.724 0 001.066-2.573c-.94-1.543.826-3.31 2.37-2.37.996.608 2.296.07 2.572-1.065z"/><circle cx="12" cy="12" r="2.65"/></g>
</svg>
<svg width="60" height="60" viewBox="400 1410 60 60" style="left:400px;top:1410px" fill="none"><path d="M436.6,1432.6 L427,1442 L436.6,1451.4" stroke="#065F46" stroke-width="5" stroke-linecap="round" stroke-linejoin="round"/></svg>
<div class="tx"><span class="t" style="left:92.10px;top:156.00px;font-size:23.8px;color:#FFFFFF;letter-spacing:-0.333px;-webkit-text-stroke:0.5px #FFFFFF;">DEMO -Test Real Est...</span>
<span class="t" style="left:93.10px;top:187.00px;font-size:23.5px;color:#A6ABB5;letter-spacing:-0.400px;">Coral Gables, FL</span>
<span class="t" style="left:65.60px;top:266.00px;font-size:28.5px;color:#A3A8B2;letter-spacing:-0.600px;">Search</span>
<span class="t" style="left:332.60px;top:269.30px;font-size:24.5px;color:#111111;letter-spacing:0.000px;">K</span>
<span class="t" style="left:87.60px;top:378.00px;font-size:29px;color:#CBCED3;letter-spacing:-0.425px;-webkit-text-stroke:0.5px #CBCED3;">Launchpad</span>
<span class="t" style="left:87.60px;top:450.00px;font-size:29px;color:#CBCED3;letter-spacing:-0.625px;-webkit-text-stroke:0.5px #CBCED3;">Dashboard</span>
<span class="t" style="left:87.60px;top:522.00px;font-size:29px;color:#CBCED3;letter-spacing:-0.383px;-webkit-text-stroke:0.5px #CBCED3;">Conversations</span>
<span class="t" style="left:87.60px;top:594.00px;font-size:29px;color:#CBCED3;letter-spacing:-0.675px;-webkit-text-stroke:0.5px #CBCED3;">Calendars</span>
<span class="t" style="left:87.60px;top:666.00px;font-size:29px;color:#CBCED3;letter-spacing:-0.200px;-webkit-text-stroke:0.5px #CBCED3;">Contacts</span>
<span class="t" style="left:87.60px;top:738.00px;font-size:29px;color:#CBCED3;letter-spacing:-0.083px;-webkit-text-stroke:0.5px #CBCED3;">Opportunities</span>
<span class="t" style="left:87.60px;top:810.00px;font-size:29px;color:#CBCED3;letter-spacing:-0.457px;-webkit-text-stroke:0.5px #CBCED3;">Payments</span>
<span class="t" style="left:87.60px;top:948.00px;font-size:29px;color:#CBCED3;letter-spacing:0.075px;-webkit-text-stroke:0.5px #CBCED3;">Marketing</span>
<span class="t" style="left:87.60px;top:1092.00px;font-size:29px;color:#CBCED3;letter-spacing:-0.250px;-webkit-text-stroke:0.5px #CBCED3;">Sites</span>
<span class="t" style="left:87.60px;top:1164.00px;font-size:29px;color:#CBCED3;letter-spacing:-0.200px;-webkit-text-stroke:0.5px #CBCED3;">Memberships</span>
<span class="t" style="left:87.60px;top:1236.00px;font-size:29px;color:#CBCED3;letter-spacing:-0.311px;-webkit-text-stroke:0.5px #CBCED3;">Reputation</span>
<span class="t" style="left:87.60px;top:1308.00px;font-size:29px;color:#CBCED3;letter-spacing:-0.300px;-webkit-text-stroke:0.5px #CBCED3;">Reporting</span>
<span class="t" style="left:87.60px;top:1422.50px;font-size:29px;color:#CBCED3;letter-spacing:-0.143px;-webkit-text-stroke:0.5px #CBCED3;">Settings</span>
<span class="t" style="left:87.60px;top:1020.00px;font-size:29px;color:#FFFFFF;letter-spacing:0.089px;-webkit-text-stroke:0.55px #FFFFFF;">Automation</span></div>
</body>
</html>
